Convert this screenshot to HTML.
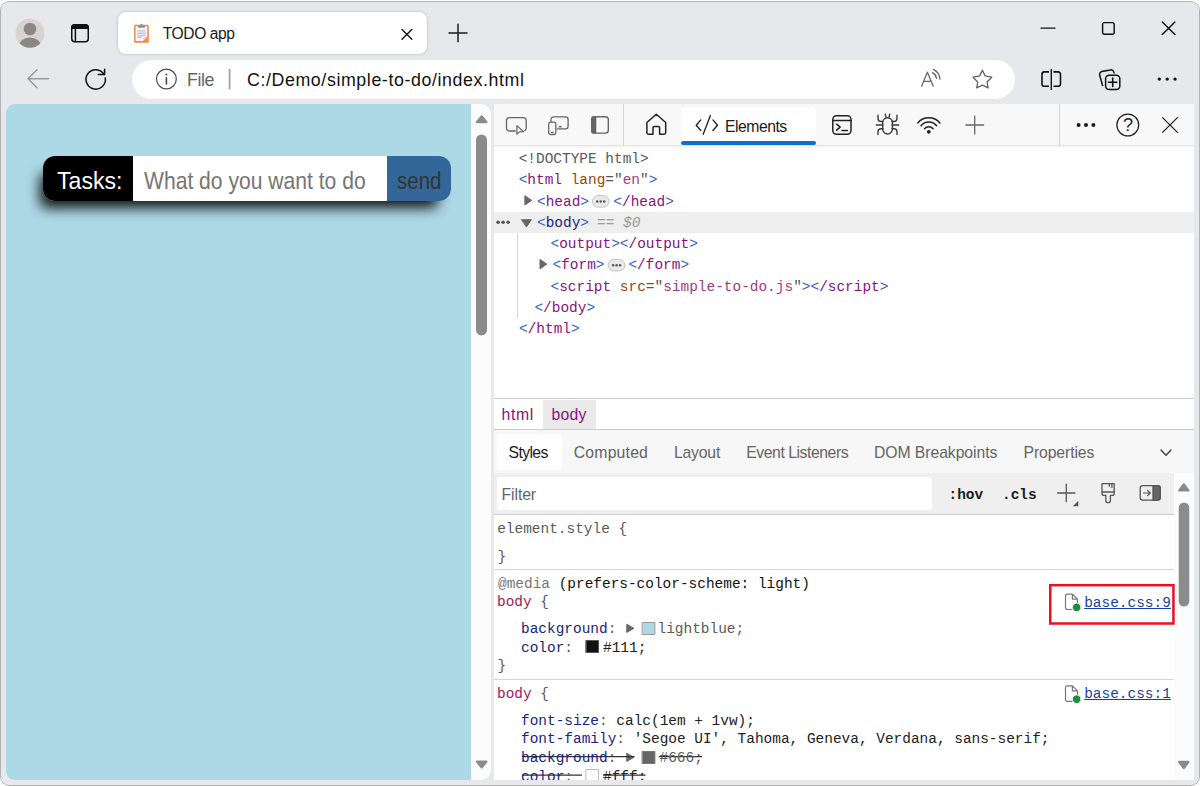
<!DOCTYPE html>
<html lang="en">
<head>
<meta charset="utf-8">
<title>TODO app</title>
<style>
html,body{margin:0;padding:0}
body{width:1200px;height:786px;position:relative;overflow:hidden;background:#fff;font-family:"Liberation Sans",sans-serif}
.win{position:absolute;left:0;top:1px;width:1200px;height:785px;border-radius:9px;overflow:hidden;background:#e7e8ec}
.in{position:absolute;left:0;top:-1px;width:1200px;height:786px}
.frame{position:absolute;left:0;top:0;width:1198px;height:783px;border:1px solid #b3b3b3;border-radius:9px;pointer-events:none}
.abs{position:absolute}
.t{position:absolute;white-space:pre;line-height:1}
.t i{font-style:normal}
.s{font-family:"Liberation Sans",sans-serif}
.m{font-family:"Liberation Mono",monospace}
.b{color:#3f63c9}.an{color:#994500}.q{color:#555}.av{color:#a23b7c}
.tab{left:118px;top:12px;width:309px;height:42px;background:#fff;border-radius:8px;box-shadow:0 0 3px rgba(0,0,0,.22)}
.addr{left:132px;top:60px;width:883px;height:39px;border-radius:19.5px;background:#fff}
.page{left:6.4px;top:104px;width:484.8px;height:676px;border-radius:9px;overflow:hidden;background:#add8e6}
.page .sb{right:0;top:0;width:19.8px;height:676px;background:#fcfcfc}
.form{left:43px;top:156px;width:408px;height:44.5px;border-radius:12px;overflow:hidden;background:#fff;box-shadow:-8px 12px 13px -5px rgba(0,0,0,.9)}
.form .lab{left:0;top:0;width:90px;height:100%;background:#000}
.form .btn{left:344.3px;top:0;width:64px;height:100%;background:#336699}
.dt{left:494px;top:104px;width:700px;height:676px;background:#fff;overflow:hidden}
.hl{position:absolute;height:1px;background:#c9cdd2}
</style>
</head>
<body>
<div class="win"><div class="in">
  <div class="abs tab"></div>
  <div class="abs addr"></div>
  <div class="abs page"><div class="abs sb"></div></div>
  <div class="abs form"><div class="abs lab"></div><div class="abs btn"></div></div>

  <div class="abs dt">
    <div class="abs" style="left:0;top:-0.5px;width:700px;height:676px">
    <div class="abs" style="left:0;top:0;width:700px;height:41.5px;background:#f8f8f8;border-bottom:1px solid #e2e2e2;box-shadow:0 1px 3px rgba(0,0,0,.07)"></div>
    <div class="abs" style="left:187.4px;top:3.5px;width:134.6px;height:38px;background:#fff;border-radius:5px 5px 0 0"></div>
    <div class="abs" style="left:187.4px;top:37.5px;width:134.6px;height:4px;background:#0b6fd3;border-radius:2px"></div>
    <div class="abs" style="left:129px;top:0;width:1px;height:41.5px;background:#d4d4d4"></div>
    <div class="abs" style="left:565.3px;top:0;width:1px;height:41.5px;background:#d4d4d4"></div>
    <div class="abs" style="left:0;top:108.5px;width:700px;height:21.2px;background:#eeeeee"></div>
    <div class="hl" style="left:0;top:294.5px;width:700px"></div>
    <div class="abs" style="left:48.6px;top:296px;width:53.2px;height:29.5px;background:#e9e9e9"></div>
    <div class="hl" style="left:0;top:325.5px;width:700px"></div>
    <div class="abs" style="left:0;top:326.5px;width:700px;height:42.5px;background:#f7f7f7"></div>
    <div class="abs" style="left:2.8px;top:330px;width:65.2px;height:36px;background:#fff;border-radius:4px"></div>
    <div class="abs" style="left:0;top:369px;width:680px;height:41.5px;background:#efefef"></div>
    <div class="abs" style="left:2.8px;top:373px;width:435.7px;height:33.8px;background:#fff;border-radius:3px"></div>
    <div class="hl" style="left:0;top:410.5px;width:680px"></div>
    <div class="hl" style="left:0;top:465.5px;width:680px;background:#d4d4d4"></div>
    <div class="hl" style="left:0;top:575.5px;width:680px;background:#d4d4d4"></div>
    <div class="abs" style="left:680px;top:369px;width:20px;height:308px;background:#fcfcfc"></div>
    </div>
  </div>

  <svg class="abs" style="left:0;top:0" width="1200" height="786" viewBox="0 0 1200 786" fill="none" stroke-linecap="round" stroke-linejoin="round">
    <!-- avatar -->
    <clipPath id="av"><circle cx="30" cy="33.3" r="14.5"/></clipPath>
    <circle cx="30" cy="33.3" r="14.5" fill="#d6d3d0"/>
    <g clip-path="url(#av)" fill="#8b8785"><circle cx="30" cy="29" r="6.3"/><ellipse cx="30" cy="46" rx="11" ry="8.6"/></g>
    <!-- tab actions -->
    <g stroke="#111" stroke-width="1.5"><rect x="71.75" y="24.75" width="16.5" height="17" rx="3"/><path d="M75.4 28.5V41.5"/><path d="M72 28.2V27.5a2.8 2.8 0 0 1 2.8-2.8H85.2a2.8 2.8 0 0 1 2.8 2.8v.7z" fill="#111"/></g>
    <!-- favicon -->
    <g stroke="none"><rect x="134.1" y="24.8" width="14.7" height="18" rx="1.3" fill="#e8923c"/><rect x="135.6" y="26.3" width="11.6" height="14.7" fill="#f6f3fc"/><path d="M147.2 36.6V41H142.9z" fill="#e8923c"/><path d="M143.2 40.8L143.6 37.2L147 36.8z" fill="#d9d6ee"/><rect x="138.1" y="25.2" width="6.7" height="2.6" rx=".5" fill="#8f8f8f"/><circle cx="141.45" cy="25" r="1.2" fill="#8f8f8f"/><circle cx="141.45" cy="25.1" r=".5" fill="#e8923c"/><path d="M137.2 30.9h8.5M137.2 33.3h8.5M137.2 35.4h8.5M137.2 37.3h5" stroke="#c6c4cc" stroke-width="1.4" stroke-linecap="butt"/></g>
    <!-- tab close, new tab -->
    <path d="M402 29.5L411.8 39.3M411.8 29.5L402 39.3" stroke="#1b1b1b" stroke-width="1.5"/>
    <path d="M449 33H467M458 24.2V41.8" stroke="#1b1b1b" stroke-width="1.5"/>
    <!-- window controls -->
    <g stroke="#111" stroke-width="1.45"><path d="M1041 28.1H1055"/><rect x="1102.6" y="22.6" width="11.6" height="11.6" rx="2"/><path d="M1162.3 21.9L1174.9 34.5M1174.9 21.9L1162.3 34.5"/></g>
    <!-- back, refresh -->
    <path d="M48.5 78.7H28M37 69.8L28 78.7L37 87.7" stroke="#9b9b9b" stroke-width="1.5"/>
    <path d="M105.3 78.1A9.7 9.7 0 1 1 104.1 74.6M104.6 69.3V74.6H98.2" stroke="#111" stroke-width="1.5"/>
    <!-- info -->
    <g stroke="#4a4a4a"><circle cx="166.4" cy="79" r="9.9" stroke-width="1.2"/><path d="M166.4 77.8V84" stroke-width="1.6"/><circle cx="166.4" cy="74.4" r="1" fill="#4a4a4a" stroke="none"/></g>
    <path d="M229.6 69V89.6" stroke="#a2a2a2" stroke-width="1.8" stroke-linecap="butt"/>
    <!-- read aloud -->
    <g stroke="#686868" stroke-width="1.3"><path d="M921.6 86.2L927.4 72.2L933.2 86.2M924 81.3H930.8"/><path d="M932.5 72.7A7.5 7.5 0 0 1 936.5 78.4M933.4 69.4A12 12 0 0 1 940 79.2"/></g>
    <!-- star -->
    <path d="M982.4 70.4L985.2 75.9L991.7 77.2L987.1 82L988.1 87.9L982.4 85.2L976.7 87.9L977.7 82L973.1 77.2L979.6 75.9Z" stroke="#5f6368" stroke-width="1.3"/>
    <!-- split -->
    <g stroke="#111" stroke-width="1.6"><path d="M1049 71.9H1044.3a2.3 2.3 0 0 0-2.3 2.3V84a2.3 2.3 0 0 0 2.3 2.3H1049M1053.5 71.9H1058.2a2.3 2.3 0 0 1 2.3 2.3V84a2.3 2.3 0 0 1-2.3 2.3H1053.5" stroke-linecap="butt"/><path d="M1051.3 69.4V89.4" stroke-width="1.4"/></g>
    <!-- collections -->
    <g stroke="#111" stroke-width="1.5"><rect x="1105.6" y="75.2" width="14.2" height="14.2" rx="3.5"/><path d="M1112.7 78.1v8.4M1108.5 82.3h8.4" stroke-width="1.6"/><path d="M1102.6 85.6L1099.7 75.2a3 3 0 0 1 2.1-3.7L1110.2 69.9a3 3 0 0 1 3.6 2l.3 1"/></g>
    <g fill="#111" stroke="none"><circle cx="1159.3" cy="79.1" r="1.7"/><circle cx="1167.2" cy="79.1" r="1.7"/><circle cx="1175" cy="79.1" r="1.7"/></g>

    <!-- page scrollbar -->
    <g fill="#8b8b8b" stroke="#8b8b8b" stroke-width="2.4"><path d="M477.1 122H486.3L481.7 116.4z"/><path d="M477.1 761.7H486.3L481.7 767.3z"/></g>
    <rect x="476" y="134.4" width="11" height="201" rx="5.5" fill="#8b8b8b"/>

    <!-- devtools toolbar icons -->
    <g stroke="#666" stroke-width="1.4">
      <path d="M515.3 131H509.3a2.8 2.8 0 0 1-2.8-2.8V120.5a2.8 2.8 0 0 1 2.8-2.8H523.4a2.8 2.8 0 0 1 2.8 2.8V128.2a2.8 2.8 0 0 1-1.4 2.4" stroke-width="1.3"/>
      <path d="M516.9 125.6V134.2L519.5 131.9L523.6 131.7z" stroke-width="1.2"/>
      <rect x="548.7" y="122.2" width="7.1" height="12.3" rx="1.8" stroke-width="1.3"/><path d="M551.3 132.3h1.9" stroke-width="1.2"/>
      <path d="M551 121.6V119.5a2.6 2.6 0 0 1 2.6-2.6H565.5a2.6 2.6 0 0 1 2.6 2.6V126.2a2.6 2.6 0 0 1-2.6 2.6H557.2" stroke-width="1.3"/>
      <path d="M558.8 126.8h2.8" stroke-width="1.5" stroke-linecap="butt"/>
      <rect x="591.7" y="116.7" width="16.6" height="16.4" rx="2.8"/><path d="M591.7 119.5a2.8 2.8 0 0 1 2.8-2.8H595.6V133.1H594.5a2.8 2.8 0 0 1-2.8-2.8z" fill="#666"/>
      <path d="M965.8 125H983.6M974.7 116.1V133.9" stroke-width="1.3"/>
    </g>
    <g stroke="#222" stroke-width="1.5">
      <path d="M646.9 122.5L656.3 114.3L665.7 122.5V132.5a1.7 1.7 0 0 1-1.7 1.7H659.6V127.7a1.2 1.2 0 0 0-1.2-1.2H654.2a1.2 1.2 0 0 0-1.2 1.2V134.2H648.6a1.7 1.7 0 0 1-1.7-1.7z"/>
      <path d="M700.8 119.9L696.2 125.2L700.8 130.5M710.4 115.6L703.2 134.2M712.9 119.9L717.5 125.2L712.9 130.5" stroke-width="1.35"/>
      <rect x="832.8" y="115.8" width="18.2" height="18.4" rx="3.6"/><path d="M833 120.4H851M836.6 124.2L840.2 127.2L836.6 130.2M842 130.4H847.4"/>
      <g stroke="#3a3a3a" stroke-width="1.4"><rect x="882.7" y="117.7" width="9.7" height="16.3" rx="4.85"/>
      <path d="M885.3 114.2L885.9 117.2M889.7 114.2L889.1 117.2M878 115.2V118.5a3 3 0 0 0 3 3H882.7M897 115.2V118.5a3 3 0 0 1-3 3H892M876.3 125H883M892 125H898.7M878 134.5V131.7a3 3 0 0 1 3-3H883M897 134.5V131.7a3 3 0 0 0-3-3H892"/></g>
      <path d="M917.7 123A14.5 14.5 0 0 1 939.9 123M921 125.75A10.2 10.2 0 0 1 936.6 125.75M924.5 128.7A5.6 5.6 0 0 1 933.1 128.7" stroke-width="1.5"/>
      <circle cx="928.8" cy="131.8" r="1.9" fill="#222" stroke="none"/>
      <circle cx="1127.8" cy="125" r="10.9" stroke-width="1.25"/>
      <path d="M1162.6 117.6L1177.4 132.4M1177.4 117.6L1162.6 132.4" stroke-width="1.25"/>
    </g>
    <g fill="#1b1b1b" stroke="none"><circle cx="1078.6" cy="124.9" r="2"/><circle cx="1086" cy="124.9" r="2"/><circle cx="1093.4" cy="124.9" r="2"/></g>

    <!-- tree decorations -->
    <g fill="#666" stroke="#666" stroke-width="1"><path d="M524.9 196.1V205L531.5 200.55z"/><path d="M521.8 219.7H531.4L526.6 226.7z"/><path d="M540 259.85V268.75L546.6 264.3z"/></g>
    <g fill="#555" stroke="none"><circle cx="498.1" cy="222.3" r="1.8"/><circle cx="503.1" cy="222.3" r="1.8"/><circle cx="508.1" cy="222.3" r="1.8"/></g>
    <path d="M517.6 233V318" stroke="#c7d5ee" stroke-width="1" stroke-linecap="butt"/>
    <g><rect x="592.3" y="195.6" width="16.8" height="11.6" rx="5.8" fill="#e9e9e9" stroke="#c6c6c6" stroke-width="1"/><g fill="#555"><circle cx="597.2" cy="201.5" r="1.25"/><circle cx="600.7" cy="201.5" r="1.25"/><circle cx="604.2" cy="201.5" r="1.25"/></g></g>
    <g transform="translate(15.9 63.75)"><rect x="592.3" y="195.6" width="16.8" height="11.6" rx="5.8" fill="#e9e9e9" stroke="#c6c6c6" stroke-width="1"/><g fill="#555"><circle cx="597.2" cy="201.5" r="1.25"/><circle cx="600.7" cy="201.5" r="1.25"/><circle cx="604.2" cy="201.5" r="1.25"/></g></g>

    <!-- styles toolbar -->
    <path d="M1161 450L1166 455.2L1171 450" stroke="#444" stroke-width="1.5"/>
    <g stroke="#555" stroke-width="1.3">
      <path d="M1057.6 493H1075M1066.3 484.2V501.7"/><path d="M1078.3 500.8V506.3H1072.8z" fill="#555" stroke="none"/>
      <path d="M1102 483.7H1114.2V493.4a2 2 0 0 1-2 2H1110.4V500.4a2.3 2.3 0 0 1-4.6 0V495.4H1104a2 2 0 0 1-2-2zM1102 492H1114.2M1109.3 484V486.2M1111.9 484V487.4"/>
      <rect x="1140.2" y="485.6" width="20" height="14.6" rx="2.6"/><path d="M1153 485.6H1157.6a2.6 2.6 0 0 1 2.6 2.6V497.6a2.6 2.6 0 0 1-2.6 2.6H1153z" fill="#666"/>
      <path d="M1143.6 493H1150M1147.6 490.4L1150.2 493L1147.6 495.6" stroke-width="1.2"/>
    </g>
    <g fill="#8b8b8b" stroke="#8b8b8b" stroke-width="2.4"><path d="M1179.3 490.4H1188.3L1183.8 484.4z"/><path d="M1179.3 762H1188.3L1183.8 768z"/></g>
    <rect x="1178.7" y="502.5" width="10.6" height="104" rx="5.3" fill="#8b8b8b"/>

    <!-- styles content decorations -->
    <g fill="#666" stroke="#666" stroke-width="1"><path d="M626.8 624.6V632.4L633.6 628.5z"/><path d="M626.8 753.6V761.4L633.6 757.5z"/></g>
    <rect x="642.5" y="622.5" width="12.4" height="12" fill="#add8e6" stroke="#9a9a9a" stroke-width="1"/>
    <rect x="586.2" y="640.5" width="12.4" height="12" fill="#111" stroke="#555" stroke-width="1"/>
    <rect x="642.5" y="751.5" width="12.4" height="12" fill="#666" stroke="#777" stroke-width="1"/>
    <rect x="586.2" y="769.5" width="12.4" height="12" fill="#fff" stroke="#bbb" stroke-width="1"/>
    <g stroke="#333" stroke-width="1.2" stroke-linecap="butt"><path d="M522 756.6H634.5M658.8 756.6H702M522 775.2H582M603 775.2H645.5"/></g>
    <g id="fileico"><path d="M1072.4 594.1H1067.3a1.8 1.8 0 0 0-1.8 1.8V607.7a1.8 1.8 0 0 0 1.8 1.8H1072M1072.4 594.1L1077.4 599.1V603M1072.4 594.1V599.1H1077.4" stroke="#777" stroke-width="1.2"/><circle cx="1076.7" cy="607.4" r="4.3" fill="#1e8e3e" stroke="#fff" stroke-width=".8"/></g>
    <g transform="translate(0 91.8)"><path d="M1072.4 594.1H1067.3a1.8 1.8 0 0 0-1.8 1.8V607.7a1.8 1.8 0 0 0 1.8 1.8H1072M1072.4 594.1L1077.4 599.1V603M1072.4 594.1V599.1H1077.4" stroke="#777" stroke-width="1.2"/><circle cx="1076.7" cy="607.4" r="4.3" fill="#1e8e3e" stroke="#fff" stroke-width=".8"/></g>
    <rect x="1050.25" y="585.2" width="123.2" height="38.3" stroke="#e8111f" stroke-width="2.5" stroke-linejoin="miter"/>
  </svg>

  <!-- chrome text -->
  <div class="t s" style="left:162.8px;top:25.9px;font-size:15.6px;color:#1b1b1b;letter-spacing:-0.43px;">TODO app</div><div class="t s" style="left:187.0px;top:71.5px;font-size:17.8px;color:#5f6368;letter-spacing:-0.4px;">File</div><div class="t s" style="left:247.0px;top:72.0px;font-size:17.8px;color:#111;letter-spacing:0.6px;">C:/Demo/simple-to-do/index.html</div>
  <!-- page text -->
  <div class="t s" style="left:56.6px;top:169.1px;font-size:24.8px;color:#fff;transform:scaleX(0.9309);transform-origin:0 0;">Tasks:</div><div class="t s" style="left:144.0px;top:169.1px;font-size:24.8px;color:#757575;transform:scaleX(0.8508);transform-origin:0 0;">What do you want to do</div><div class="t s" style="left:396.9px;top:169.1px;font-size:24.8px;color:#333;transform:scaleX(0.8275);transform-origin:0 0;">send</div>
  <!-- devtools text -->
  <div class="t s" style="left:725.0px;top:118.7px;font-size:15.75px;color:#1b1b1b;letter-spacing:-0.49px;">Elements</div>
  <div class="t s" style="left:1122.9px;top:116.3px;font-size:18px;color:#222">?</div>
  <div class="t m" style="left:518.7px;top:152.0px;font-size:14.45px;color:#5a5a5a;">&lt;!DOCTYPE html&gt;</div><div class="t m" style="left:518.7px;top:173.2px;font-size:14.45px;color:#881280;"><i class="b">&lt;</i>html <i class="an">lang</i><i class="q">="</i><i class="av">en</i><i class="q">"</i><i class="b">&gt;</i></div><div class="t m" style="left:537.0px;top:194.5px;font-size:14.45px;color:#881280;"><i class="b">&lt;</i>head<i class="b">&gt;</i></div><div class="t m" style="left:613.3px;top:194.5px;font-size:14.45px;color:#881280;"><i class="b">&lt;</i>/head<i class="b">&gt;</i></div><div class="t m" style="left:537.0px;top:215.8px;font-size:14.45px;color:#1a237e;"><i class="b">&lt;</i>body<i class="b">&gt;</i></div><div class="t m" style="left:597.0px;top:215.8px;font-size:14.45px;color:#9a9a9a;font-style:italic;">== $0</div><div class="t m" style="left:550.5px;top:237.0px;font-size:14.45px;color:#881280;"><i class="b">&lt;</i>output<i class="b">&gt;&lt;</i>/output<i class="b">&gt;</i></div><div class="t m" style="left:552.5px;top:258.2px;font-size:14.45px;color:#881280;"><i class="b">&lt;</i>form<i class="b">&gt;</i></div><div class="t m" style="left:628.4px;top:258.2px;font-size:14.45px;color:#881280;"><i class="b">&lt;</i>/form<i class="b">&gt;</i></div><div class="t m" style="left:550.5px;top:279.5px;font-size:14.45px;color:#881280;"><i class="b">&lt;</i>script <i class="an">src</i><i class="q">="</i><i class="av">simple-to-do.js</i><i class="q">"</i><i class="b">&gt;&lt;</i>/script<i class="b">&gt;</i></div><div class="t m" style="left:534.4px;top:300.8px;font-size:14.45px;color:#881280;"><i class="b">&lt;</i>/body<i class="b">&gt;</i></div><div class="t m" style="left:519.0px;top:322.0px;font-size:14.45px;color:#881280;"><i class="b">&lt;</i>/html<i class="b">&gt;</i></div>
  <div class="t s" style="left:501.5px;top:407.2px;font-size:15.75px;color:#881280;letter-spacing:0.67px;">html</div><div class="t s" style="left:551.4px;top:407.2px;font-size:15.75px;color:#881280;letter-spacing:0.27px;">body</div>
  <div class="t s" style="left:508.6px;top:445.3px;font-size:15.75px;color:#1b1b1b;letter-spacing:-0.64px;">Styles</div><div class="t s" style="left:573.8px;top:445.3px;font-size:15.75px;color:#636363;letter-spacing:0.2px;">Computed</div><div class="t s" style="left:674.0px;top:445.3px;font-size:15.75px;color:#646464;letter-spacing:-0.2px;">Layout</div><div class="t s" style="left:746.3px;top:445.3px;font-size:15.75px;color:#646464;letter-spacing:-0.45px;">Event Listeners</div><div class="t s" style="left:874.0px;top:445.3px;font-size:15.75px;color:#646464;letter-spacing:-0.07px;">DOM Breakpoints</div><div class="t s" style="left:1023.5px;top:445.3px;font-size:15.75px;color:#646464;letter-spacing:-0.1px;">Properties</div>
  <div class="t s" style="left:501.5px;top:487.2px;font-size:15.75px;color:#646464;letter-spacing:-0.08px;">Filter</div><div class="t m" style="left:948.5px;top:487.8px;font-size:14.45px;color:#1b1b1b;font-weight:700;">:hov</div><div class="t m" style="left:1002.0px;top:487.8px;font-size:14.45px;color:#1b1b1b;font-weight:700;">.cls</div>
  <div class="t m" style="left:497.2px;top:521.5px;font-size:14.45px;color:#5a5a5a;">element.style {</div>
  <div class="t m" style="left:497.5px;top:549.9px;font-size:14.45px;color:#5a5a5a">}</div>
  <div class="t m" style="left:498.0px;top:576.5px;font-size:14.45px;color:#111;"><i style="color:#777">@media</i> (prefers-color-scheme: light)</div><div class="t m" style="left:497.0px;top:595.0px;font-size:14.45px;color:#9b1a5e;">body <i style="color:#5a5a5a">{</i></div><div class="t m" style="left:521.0px;top:622.0px;font-size:14.45px;color:#1a237e;">background<i style="color:#5a5a5a">:</i></div><div class="t m" style="left:657.5px;top:622.0px;font-size:14.45px;color:#5a5a5a;">lightblue;</div><div class="t m" style="left:521.0px;top:640.8px;font-size:14.45px;color:#1a237e;">color<i style="color:#5a5a5a">:</i></div><div class="t m" style="left:603.0px;top:640.8px;font-size:14.45px;color:#222;">#111;</div>
  <div class="t m" style="left:497.5px;top:659.4px;font-size:14.45px;color:#5a5a5a">}</div>
  <div class="t m" style="left:497.0px;top:686.5px;font-size:14.45px;color:#9b1a5e;">body <i style="color:#5a5a5a">{</i></div><div class="t m" style="left:521.0px;top:713.5px;font-size:14.45px;color:#222;"><i style="color:#1a237e">font-size</i><i style="color:#5a5a5a">:</i> calc(1em + 1vw);</div><div class="t m" style="left:521.0px;top:732.2px;font-size:14.45px;color:#222;"><i style="color:#1a237e">font-family</i><i style="color:#5a5a5a">:</i> 'Segoe UI', Tahoma, Geneva, Verdana, sans-serif;</div><div class="t m" style="left:521.0px;top:751.0px;font-size:14.45px;color:#1a237e;">background<i style="color:#5a5a5a">:</i></div><div class="t m" style="left:659.5px;top:751.0px;font-size:14.45px;color:#5a5a5a;">#666;</div><div class="t m" style="left:521.0px;top:769.8px;font-size:14.45px;color:#1a237e;">color<i style="color:#5a5a5a">:</i></div><div class="t m" style="left:603.0px;top:769.8px;font-size:14.45px;color:#222;">#fff;</div>
  <div class="t m" style="left:1084.2px;top:595.5px;font-size:14.45px;color:#1a3fa0;text-decoration:underline;">base.css:9</div><div class="t m" style="left:1084.2px;top:687.3px;font-size:14.45px;color:#1a3fa0;text-decoration:underline;">base.css:1</div>
  <!-- bottom chrome strip covers overflow of last line -->
  <div class="abs" style="left:0;top:780px;width:1200px;height:6px;background:#e7e8ec"></div>
  </div><div class="frame"></div>
</div>
</body>
</html>
